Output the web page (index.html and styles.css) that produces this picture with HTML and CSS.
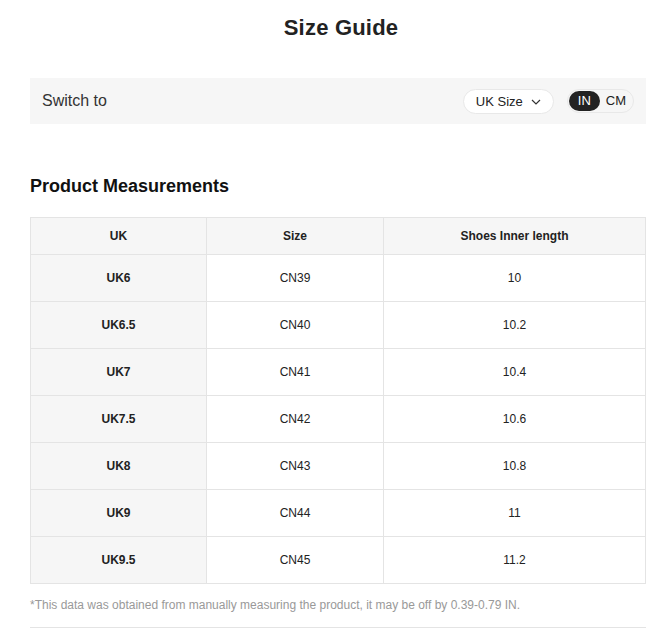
FILE: index.html
```html
<!DOCTYPE html>
<html>
<head>
<meta charset="utf-8">
<link rel="stylesheet" href="styles.css">
</head>
<body>
<div class="page">
  <h1 class="title">Size Guide</h1>
  <div class="switch-bar">
    <span class="switch-label">Switch to</span>
    <div class="switch-controls">
      <div class="dropdown">UK Size
        <svg class="chev" width="10" height="6" viewBox="0 0 10 6"><path d="M1 1l4 4 4-4" fill="none" stroke="#333" stroke-width="1.2"/></svg>
      </div>
      <div class="toggle">
        <span class="opt active">IN</span>
        <span class="opt">CM</span>
      </div>
    </div>
  </div>
  <h2 class="section">Product Measurements</h2>
  <table class="sizes">
    <thead>
      <tr><th class="c1">UK</th><th class="c2">Size</th><th>Shoes Inner length</th></tr>
    </thead>
    <tbody>
      <tr><td class="key">UK6</td><td>CN39</td><td>10</td></tr>
      <tr><td class="key">UK6.5</td><td>CN40</td><td>10.2</td></tr>
      <tr><td class="key">UK7</td><td>CN41</td><td>10.4</td></tr>
      <tr><td class="key">UK7.5</td><td>CN42</td><td>10.6</td></tr>
      <tr><td class="key">UK8</td><td>CN43</td><td>10.8</td></tr>
      <tr><td class="key">UK9</td><td>CN44</td><td>11</td></tr>
      <tr><td class="key">UK9.5</td><td>CN45</td><td>11.2</td></tr>
    </tbody>
  </table>
  <p class="note">*This data was obtained from manually measuring the product, it may be off by 0.39-0.79 IN.</p>
  <div class="rule"></div>
</div>
</body>
</html>
```
FILE: styles.css
```css
html, body { margin: 0; padding: 0; background: #fff; }
body { font-family: "Liberation Sans", Arial, sans-serif; color: #222; }
.page { padding: 0 18px 0 30px; }
.title {
  margin: 0; padding-top: 15px; height: 78px; box-sizing: border-box;
  text-align: center; font-size: 22px; font-weight: 900; color: #222;
  padding-left: 6px; letter-spacing: 0.2px;
}
.switch-bar {
  display: flex; align-items: center; justify-content: space-between;
  background: #f6f6f6; height: 46px; padding: 0 12px;
}
.switch-label { font-size: 16px; color: #333; }
.switch-controls { display: flex; align-items: center; gap: 13px; }
.dropdown {
  display: flex; align-items: center; gap: 8px;
  height: 25px; box-sizing: border-box; padding: 0 12px 0 12px;
  background: #fff; border: 1px solid #e8e8e8; border-radius: 13px;
  font-size: 13px; color: #222;
}
.chev { margin-top: 1px; }
.toggle {
  display: flex; align-items: center; height: 24px; box-sizing: border-box;
  border: 1px solid #e8e8e8; border-radius: 12px; background: #f6f6f6; padding: 0 1px;
}
.opt { font-size: 13px; color: #222; padding: 0 6px; line-height: 20px; border-radius: 10px; }
.opt.active { background: #222; color: #fff; padding: 0 9px; }
.section { margin: 0; padding-top: 52px; font-size: 18px; font-weight: 700; color: #111; height: 93px; box-sizing: border-box; }
.sizes {
  width: 616px; border-collapse: collapse; table-layout: fixed;
  font-size: 12px; color: #222;
}
.sizes th, .sizes td { border: 1px solid #e4e4e4; text-align: center; padding: 0; }
.sizes th { background: #f6f6f6; font-weight: 700; height: 36px; }
.sizes th.c1 { width: 175px; }
.sizes th.c2 { width: 176px; }
.sizes td { height: 46px; }
.sizes td.key { background: #f6f6f6; font-weight: 700; }
.note { margin: 14px 0 0; font-size: 12px; color: #999; }
.rule { margin-top: 15px; border-top: 1px solid #e4e4e4; }
```
